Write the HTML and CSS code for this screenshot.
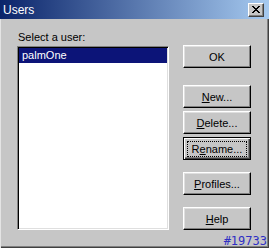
FILE: index.html
```html
<!DOCTYPE html>
<html lang="en">
<head>
  <meta charset="UTF-8" />
  <meta name="viewport" content="width=device-width, initial-scale=1.0" />
  <title>Users</title>
  <link rel="stylesheet" href="styles.css">
</head>
<body>
  <div class="window">
    <div class="titlebar">
      <span class="title">Users</span>
      <button class="close" aria-label="Close">
        <svg width="8" height="7" viewBox="0 0 8 7">
          <path d="M0 0 L7 7 M1 0 L8 7 M7 0 L0 7 M8 0 L1 7" stroke="#000" stroke-width="1" fill="none" />
        </svg>
      </button>
    </div>

    <div class="content">
      <div class="users">
        <div class="label">Select a user:</div>
        <div class="listbox">
          <div class="item selected">palmOne</div>
        </div>
      </div>

      <div class="actions">
        <button class="btn ok">OK</button>
        <button class="btn new"><u>N</u>ew...</button>
        <button class="btn delete"><u>D</u>elete...</button>
        <button class="btn rename focused"><span class="focus">R<u>e</u>name...</span></button>
        <button class="btn profiles"><u>P</u>rofiles...</button>
        <button class="btn help"><u>H</u>elp</button>
      </div>
    </div>

    <span class="tag">#19733</span>
  </div>
</body>
</html>
```

FILE: styles.css
```css
body {
  margin: 0;
  font-family: 'Liberation Sans', Arial, sans-serif;
  font-size: 11px;
  color: #000;
  background-color: #c6c6c6;
}

.window {
  position: relative;
  width: 269px;
  height: 248px;
  box-sizing: border-box;
  background-color: #c6c6c6;
  box-shadow: inset 1px 0 #e4e4e4, inset -1px -1px #404040, inset -2px -2px #808080;
  overflow: hidden;
}

.titlebar {
  height: 19px;
  display: flex;
  justify-content: space-between;
  align-items: center;
  padding: 0 5px 0 3px;
  background: linear-gradient(to right, #0a246a, #a6caf0);
}

.title {
  color: #fff;
  font-size: 12px;
  line-height: 14px;
}

.close {
  width: 16px;
  height: 14px;
  padding: 0;
  display: flex;
  align-items: center;
  justify-content: center;
  background-color: #c6c6c6;
  border: 1px solid;
  border-color: #fff #404040 #404040 #fff;
  box-shadow: inset -1px -1px #808080;
}

.close svg {
  display: block;
}

.content {
  display: flex;
  gap: 14px;
  padding: 12px 0 0 17px;
}

.users {
  width: 152px;
}

.label {
  line-height: 13px;
  margin: 0 0 2px 1px;
}

.listbox {
  height: 184px;
  box-sizing: border-box;
  background-color: #fff;
  border: 1px solid;
  border-color: #808080 #fff #fff #808080;
  box-shadow: inset 1px 1px #000, inset -1px -1px #dfdfdf;
  padding: 1px;
}

.item {
  height: 15px;
  line-height: 15px;
  padding-left: 3px;
}

.item.selected {
  background-color: #0c1478;
  color: #fff;
}

.actions {
  display: flex;
  flex-direction: column;
  padding-top: 14px;
}

.btn {
  width: 68px;
  height: 23px;
  padding: 0;
  font-family: inherit;
  font-size: 11px;
  color: #000;
  background-color: #c6c6c6;
  border: 1px solid;
  border-color: #fff #000 #000 #fff;
  box-shadow: inset -1px -1px #808080, inset 1px 1px #dfdfdf;
}

.btn u {
  text-decoration: underline;
}

.new {
  margin-top: 17px;
}

.delete,
.rename {
  margin-top: 3px;
}

.profiles,
.help {
  margin-top: 12px;
}

.btn.focused {
  display: flex;
  align-items: center;
  justify-content: center;
  border-color: #000;
  box-shadow: inset 1px 1px #fff, inset -1px -1px #404040, inset -2px -2px #808080;
}

.focus {
  width: 58px;
  height: 14px;
  line-height: 14px;
  text-align: center;
  outline: 1px dotted #000;
}

.tag {
  position: absolute;
  right: 2px;
  bottom: 1px;
  font-family: 'DejaVu Sans Mono', monospace;
  font-size: 12px;
  line-height: 12px;
  color: #2f2fc4;
}
```
